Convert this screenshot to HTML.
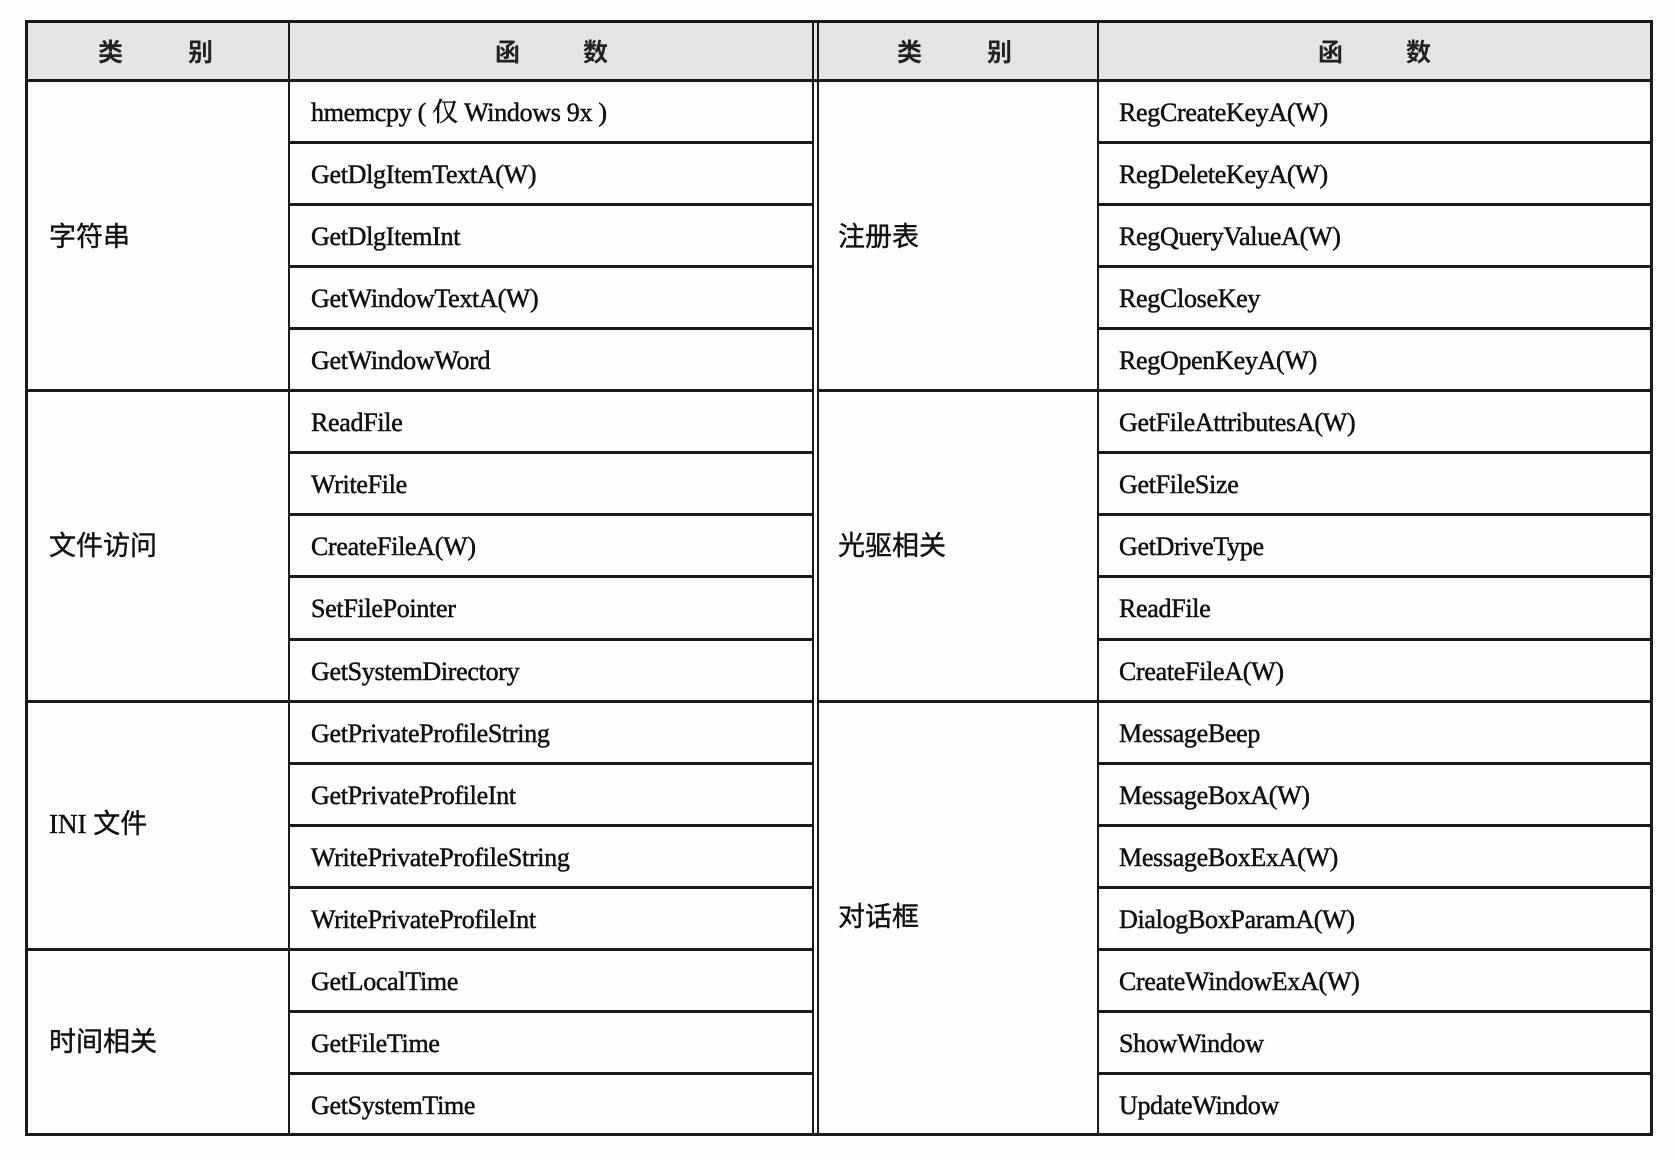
<!DOCTYPE html>
<html><head><meta charset="utf-8"><style>
body{margin:0;width:1676px;height:1160px;background:#fdfdfd;position:relative;overflow:hidden;font-family:"Liberation Serif","Noto Serif CJK SC",serif;color:#111;}
.h,.v{position:absolute;background:#1a1a1a;}
.t{position:absolute;font-size:26px;line-height:62px;height:62px;white-space:nowrap;-webkit-text-stroke:0.5px #111;letter-spacing:-0.3px;}
.c{position:absolute;font-family:"Liberation Serif","Noto Sans CJK SC",sans-serif;font-size:27px;line-height:30px;-webkit-text-stroke:0.4px #111;}
.hd{position:absolute;top:22px;height:58px;background:#e4e4e2;}
.ht{position:absolute;top:22px;line-height:58px;font-family:"Noto Sans CJK SC",sans-serif;font-size:25px;font-weight:bold;color:#222;}
</style></head><body>
<div class="hd" style="left:26px;width:1626px"></div>
<div class="ht" style="left:98px">类</div><div class="ht" style="left:188px">别</div>
<div class="ht" style="left:495px">函</div><div class="ht" style="left:583px">数</div>
<div class="ht" style="left:897px">类</div><div class="ht" style="left:987px">别</div>
<div class="ht" style="left:1318px">函</div><div class="ht" style="left:1406px">数</div>

<div class="h" style="left:26px;top:20px;width:1627px;height:3px"></div>
<div class="h" style="left:26px;top:79px;width:1627px;height:3px"></div>
<div class="h" style="left:26px;top:1133px;width:1627px;height:3px"></div>
<div class="v" style="left:25px;top:20px;width:3px;height:1116px"></div>
<div class="v" style="left:1650px;top:20px;width:3px;height:1116px"></div>
<div class="v" style="left:288px;top:20px;width:2px;height:1116px"></div>
<div class="v" style="left:812px;top:20px;width:2px;height:1116px"></div>
<div class="v" style="left:817px;top:20px;width:2px;height:1116px"></div>
<div class="v" style="left:1097px;top:20px;width:2px;height:1116px"></div>

<div id="lines"></div>
<script>
var L=document.getElementById('lines'),s='';
var top0=80,rh=62.06;
var leftGroups=[5,10,14],rightGroups=[5,10];
for(var i=1;i<17;i++){var y=Math.round(top0+rh*i)-1;
 var full=leftGroups.indexOf(i)>=0;
 s+='<div class="h" style="left:'+(full?26:289)+'px;top:'+y+'px;width:'+(full?788:525)+'px;height:3px"></div>';
 var rf=rightGroups.indexOf(i)>=0;
 s+='<div class="h" style="left:'+(rf?817:1098)+'px;top:'+y+'px;width:'+(rf?836:555)+'px;height:3px"></div>';
}
var lf=["hmemcpy ( 仅 Windows 9x )","GetDlgItemTextA(W)","GetDlgItemInt","GetWindowTextA(W)","GetWindowWord","ReadFile","WriteFile","CreateFileA(W)","SetFilePointer","GetSystemDirectory","GetPrivateProfileString","GetPrivateProfileInt","WritePrivateProfileString","WritePrivateProfileInt","GetLocalTime","GetFileTime","GetSystemTime"];
var rf2=["RegCreateKeyA(W)","RegDeleteKeyA(W)","RegQueryValueA(W)","RegCloseKey","RegOpenKeyA(W)","GetFileAttributesA(W)","GetFileSize","GetDriveType","ReadFile","CreateFileA(W)","MessageBeep","MessageBoxA(W)","MessageBoxExA(W)","DialogBoxParamA(W)","CreateWindowExA(W)","ShowWindow","UpdateWindow"];
for(var i=0;i<17;i++){var y=Math.round(top0+rh*i)+2;
 s+='<div class="t" style="left:311px;top:'+y+'px">'+lf[i]+'</div>';
 s+='<div class="t" style="left:1119px;top:'+y+'px">'+rf2[i]+'</div>';}
var cats=[["字符串",222],["文件访问",511],["INI 文件",771],["时间相关",975],["注册表",222],["光驱相关",511],["对话框",858]];
for(var i=0;i<7;i++){var x=i<4?49:838;var y=Math.round(cats[i][1]*1.069)-15;
 s+='<div class="c" style="left:'+x+'px;top:'+y+'px">'+cats[i][0]+'</div>';}
L.innerHTML=s;
</script>
</body></html>
